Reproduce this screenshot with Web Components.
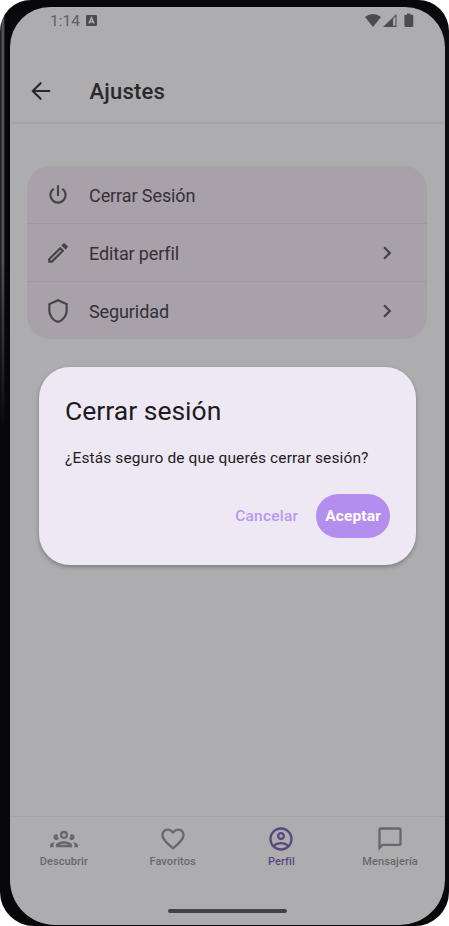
<!DOCTYPE html>
<html lang="es">
<head>
<meta charset="utf-8">
<title>Ajustes</title>
<style>
html,body{margin:0;height:100%;background:#fff;overflow:hidden}
body{font-family:Roboto,"Liberation Sans",sans-serif}
</style>
</head>
<body>
<phone-frame>
  <status-bar></status-bar>
  <app-header>Ajustes</app-header>
  <settings-list>
    <settings-row icon="power" style="--ls:-.09px">Cerrar Sesión</settings-row>
    <settings-row icon="pencil" chevron style="--ls:-.14px">Editar perfil</settings-row>
    <settings-row icon="shield" chevron style="--ls:-.1px">Seguridad</settings-row>
  </settings-list>
  <tab-bar slot="bottom">
    <tab-item icon="group">Descubrir</tab-item>
    <tab-item icon="heart">Favoritos</tab-item>
    <tab-item icon="account" active>Perfil</tab-item>
    <tab-item icon="message">Mensajería</tab-item>
  </tab-bar>
  <confirm-dialog slot="overlay">
    <span slot="title">Cerrar sesión</span>
    <span slot="message">¿Estás seguro de que querés cerrar sesión?</span>
    <dialog-button slot="actions">Cancelar</dialog-button>
    <dialog-button slot="actions" filled>Aceptar</dialog-button>
  </confirm-dialog>
</phone-frame>
<script>
const ICONS = {
  power:'<path d="M16.56,5.44L15.11,6.89C16.84,7.94 18,9.83 18,12A6,6 0 0,1 12,18A6,6 0 0,1 6,12C6,9.83 7.16,7.94 8.88,6.88L7.44,5.44C5.36,6.88 4,9.28 4,12A8,8 0 0,0 12,20A8,8 0 0,0 20,12C20,9.28 18.64,6.88 16.56,5.44M13,3H11V13H13"/>',
  pencil:'<path d="M14.06,9L15,9.94L5.92,19H5V18.08L14.06,9M17.66,3C17.41,3 17.15,3.1 16.96,3.29L15.13,5.12L18.88,8.87L20.71,7.04C21.1,6.65 21.1,6 20.71,5.63L18.37,3.29C18.17,3.09 17.92,3 17.66,3M14.06,6.19L3,17.25V21H6.75L17.81,9.94L14.06,6.19Z"/>',
  shield:'<path d="M21,11C21,16.55 17.16,21.74 12,23C6.84,21.74 3,16.55 3,11V5L12,1L21,5V11M12,21C15.75,20 19,15.54 19,11.22V6.3L12,3.18L5,6.3V11.22C5,15.54 8.25,20 12,21Z"/>',
  chevron:'<path d="M8.59,16.58L13.17,12L8.59,7.41L10,6L16,12L10,18L8.59,16.58Z"/>',
  back:'<path d="M19.7 12H4.8M11.6 4.8L4.4 12l7.2 7.2" fill="none" stroke="currentColor" stroke-width="2" stroke-linecap="round" stroke-linejoin="round"/>',
  group:'<path d="M12,5A3.5,3.5 0 0,0 8.5,8.5A3.5,3.5 0 0,0 12,12A3.5,3.5 0 0,0 15.5,8.5A3.5,3.5 0 0,0 12,5M12,7A1.5,1.5 0 0,1 13.5,8.5A1.5,1.5 0 0,1 12,10A1.5,1.5 0 0,1 10.5,8.5A1.5,1.5 0 0,1 12,7M5.5,8A2.5,2.5 0 0,0 3,10.5C3,11.44 3.53,12.25 4.29,12.68C4.65,12.88 5.06,13 5.5,13C5.94,13 6.35,12.88 6.71,12.68C7.08,12.47 7.39,12.17 7.62,11.81C6.89,10.86 6.5,9.7 6.5,8.5C6.5,8.41 6.5,8.31 6.5,8.22C6.2,8.08 5.86,8 5.5,8M18.5,8C18.14,8 17.8,8.08 17.5,8.22C17.5,8.31 17.5,8.41 17.5,8.5C17.5,9.7 17.11,10.86 16.38,11.81C16.5,12 16.63,12.15 16.78,12.3C16.94,12.45 17.1,12.58 17.29,12.68C17.65,12.88 18.06,13 18.5,13C18.94,13 19.35,12.88 19.71,12.68C20.47,12.25 21,11.44 21,10.5A2.5,2.5 0 0,0 18.5,8M12,14C9.66,14 5,15.17 5,17.5V19H19V17.5C19,15.17 14.34,14 12,14M4.71,14.55C2.78,14.78 0,15.76 0,17.5V19H3V17.07C3,16.06 3.69,15.22 4.71,14.55M19.29,14.55C20.31,15.22 21,16.06 21,17.07V19H24V17.5C24,15.76 21.22,14.78 19.29,14.55M12,16C13.53,16 15.24,16.5 16.23,17H7.77C8.76,16.5 10.47,16 12,16Z"/>',
  heart:'<path d="M12.1,18.55L12,18.65L11.89,18.55C7.14,14.24 4,11.39 4,8.5C4,6.5 5.5,5 7.5,5C9.04,5 10.54,6 11.07,7.36H12.93C13.46,6 14.96,5 16.5,5C18.5,5 20,6.5 20,8.5C20,11.39 16.86,14.24 12.1,18.55M16.5,3C14.76,3 13.09,3.81 12,5.08C10.91,3.81 9.24,3 7.5,3C4.42,3 2,5.41 2,8.5C2,12.27 5.4,15.36 10.55,20.03L12,21.35L13.45,20.03C18.6,15.36 22,12.27 22,8.5C22,5.41 19.58,3 16.5,3Z"/>',
  account:'<path d="M12,2A10,10 0 0,0 2,12A10,10 0 0,0 12,22A10,10 0 0,0 22,12A10,10 0 0,0 12,2M7.07,18.28C7.5,17.38 10.12,16.5 12,16.5C13.88,16.5 16.5,17.38 16.93,18.28C15.57,19.36 13.86,20 12,20C10.14,20 8.43,19.36 7.07,18.28M18.36,16.83C16.93,15.09 13.46,14.5 12,14.5C10.54,14.5 7.07,15.09 5.64,16.83C4.62,15.5 4,13.82 4,12C4,7.59 7.59,4 12,4C16.41,4 20,7.59 20,12C20,13.82 19.38,15.5 18.36,16.83M12,6C10.06,6 8.5,7.56 8.5,9.5C8.5,11.44 10.06,13 12,13C13.94,13 15.5,11.44 15.5,9.5C15.5,7.56 13.94,6 12,6M12,11A1.5,1.5 0 0,1 10.5,9.5A1.5,1.5 0 0,1 12,8A1.5,1.5 0 0,1 13.5,9.5A1.5,1.5 0 0,1 12,11Z"/>',
  message:'<path d="M20 2H4C2.9 2 2 2.9 2 4V22L6 18H20C21.1 18 22 17.1 22 16V4C22 2.9 21.1 2 20 2M20 16H5.2L4 17.2V4H20V16Z"/>'
};
const define = (name, render) => customElements.define(name, class extends HTMLElement {
  constructor(){ super(); this.attachShadow({mode:'open'}); }
  connectedCallback(){ this.shadowRoot.innerHTML = render(this); }
});

define('ui-icon', el => `<style>:host{display:block;flex:none;width:var(--size,26px);height:var(--size,26px)}svg{display:block;width:100%;height:100%;fill:currentColor}</style>
<svg viewBox="0 0 24 24">${ICONS[el.getAttribute('name')]}</svg>`);

define('phone-frame', () => `<style>
:host{display:grid;box-sizing:border-box;width:449px;height:926px;padding:7px 4px 1px 10px;border-radius:31px 31px 34px 34px;
 background:linear-gradient(#08080a 10px,#0000 16px,#0000 260px,#08080a 430px),linear-gradient(90deg,#1c1c1f 0,#242427 1px,#656568 3px,#38383b 4px,#08080a 5px,#050507 10px,#0a0b0d 10px)}
.screen{display:flex;flex-direction:column;position:relative;min-height:0;border-radius:40px 40px 45px 45px;background:#adadaf;overflow:hidden}
.content{flex:1;display:flex;flex-direction:column}
.overlay{position:absolute;inset:0;display:grid;align-content:start;padding:359.5px 29px 0 28.5px}
</style><div class="screen"><div class="content"><slot></slot></div><slot name="bottom"></slot><div class="overlay"><slot name="overlay"></slot></div></div>`);

define('status-bar', () => `<style>
:host{display:flex;align-items:center;height:27px;padding:0 31px 0 40px;color:#4c4c4e}
.time{font-size:15.5px;line-height:26px;padding-top:1px;letter-spacing:0;color:#5f5f61}
.app{width:11px;height:11px;margin-left:6.5px}
.right{margin-left:auto;width:49px;height:16px}svg{display:block}
</style><span class="time">1:14</span>
<svg class="app" viewBox="0 0 11 11"><rect width="11" height="11" rx="1.3" fill="#4c4c4e"/><path d="M3 8.5L5.5 2.7 8 8.5M3.9 6.8H7.1" fill="none" stroke="#b1b1b3" stroke-width="1.4"/></svg>
<svg class="right" viewBox="0 0 49 16" fill="currentColor"><path d="M0 4Q8 -2 16 4L8 14Z"/><path d="M18 14L31.5 1V14Z"/><path d="M28.1 5.7L30.5 3.4V12.8H28.1Z" fill="#adadaf"/><path d="M40.5 1.7H42V.4H45.5V1.7H47Q48.3 1.7 48.3 3V12.7Q48.3 14 47 14H40.7Q39.4 14 39.4 12.7V3Q39.4 1.7 40.5 1.7Z"/></svg>`);

define('app-header', () => `<style>
:host{display:flex;align-items:center;height:88px;flex:none;gap:35.5px;padding:27px 0 0 18px;box-sizing:border-box;color:#29292b;box-shadow:0 1px 2px #9c9c9f;font-weight:500;font-size:22px;line-height:28px}
ui-icon{--size:26px;margin-top:-1px}
.t{letter-spacing:.2px;padding-top:1px}
</style><ui-icon name="back"></ui-icon><span class="t"><slot></slot></span>`);

define('settings-list', () => `<style>
:host{display:flex;flex-direction:column;margin:44px 18px 0 17px;border-radius:23px;background:#a8a1a9;overflow:hidden}
::slotted(*:not(:last-child)){border-bottom:1px solid #a098a1}
</style><slot></slot>`);

define('settings-row', el => `<style>
:host{display:flex;align-items:center;height:57px;padding:0 27px 0 18px;color:#343036;font-size:18px;line-height:24px}
.label{flex:1;margin-left:18px;padding-top:2px;letter-spacing:var(--ls,0)}
ui-icon{color:#464248}
</style><ui-icon name="${el.getAttribute('icon')}"></ui-icon><span class="label"><slot></slot></span>${el.hasAttribute('chevron')?'<ui-icon name="chevron"></ui-icon>':''}`);

define('tab-bar', () => `<style>
:host{display:flex;flex-direction:column;height:109px;box-sizing:border-box;border-top:1px solid #a3a2a6}
.tabs{display:grid;grid-template-columns:repeat(4,108.75px);margin-left:-.5px;padding-top:7.7px}
.home{width:119px;height:4px;border-radius:2px;background:#434345;margin:auto auto 12px 157.5px}
</style><div class="tabs"><slot></slot></div><div class="home"></div>`);

define('tab-item', el => `<style>
:host{display:flex;flex-direction:column;align-items:center;color:#68686b;font-size:11px;font-weight:500;line-height:14px;letter-spacing:.1px}
:host([active]){color:#58487f}
ui-icon{--size:28px;margin-bottom:2.8px}
</style><ui-icon name="${el.getAttribute('icon')}"></ui-icon><span><slot></slot></span>`);

define('confirm-dialog', () => `<style>
:host{display:flex;flex-direction:column;box-sizing:border-box;height:198px;padding:26.5px 26px 26.5px 26.5px;border-radius:31px;background:#eee8f4;box-shadow:0 2px 4px #00000048;color:#1d1b20}
.title{font-size:26.5px;line-height:36px;letter-spacing:0}
.msg{font-size:15.5px;line-height:22px;margin-top:17.5px;letter-spacing:.12px;white-space:nowrap}
.actions{display:flex;justify-content:flex-end;gap:9px;margin-top:auto}
</style><div class="title"><slot name="title"></slot></div><div class="msg"><slot name="message"></slot></div><div class="actions"><slot name="actions"></slot></div>`);

define('dialog-button', () => `<style>
:host{display:flex;align-items:center;height:44px;padding:0 9px;border-radius:22px;color:#ba98ef;font-size:15.5px;font-weight:500;letter-spacing:.2px}
:host([filled]){background:#b48eef;color:#fff;font-weight:700;letter-spacing:.15px}
</style><slot></slot>`);
</script>
</body>
</html>
